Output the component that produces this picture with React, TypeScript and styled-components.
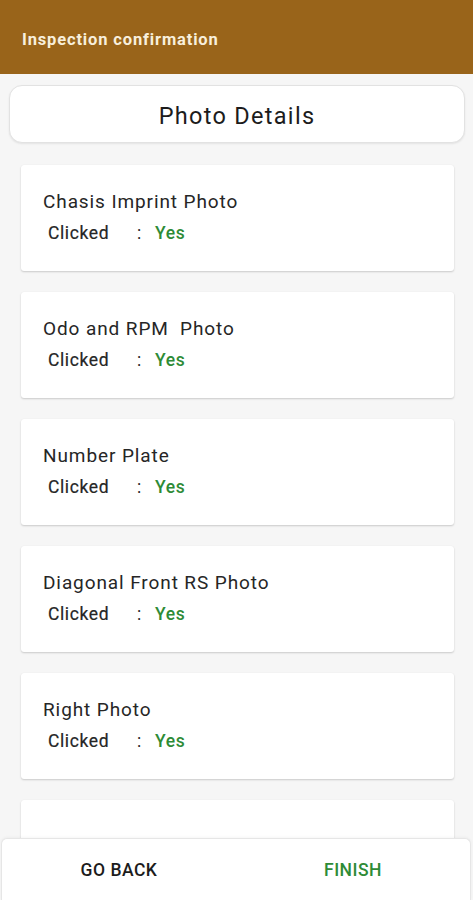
import React from "react";
import styled, { createGlobalStyle } from "styled-components";

const Global = createGlobalStyle`
  html, body { margin: 0; padding: 0; height: 100%; overflow: hidden; }
  body { font-family: Roboto, "Noto Sans", Arial, sans-serif; background: #f6f6f6; }
  * { box-sizing: border-box; }
`;

const Screen = styled.div`
  width: 473px;
  height: 900px;
  display: flex;
  flex-direction: column;
  background: #f6f6f6;
  position: relative;
  overflow: hidden;
`;

const Header = styled.header`
  height: 74px;
  flex-shrink: 0;
  background: #99641a;
  display: flex;
  align-items: center;
  padding: 4px 22px 0 22px;
`;

const HeaderTitle = styled.h1`
  margin: 0;
  font-size: 16.5px;
  font-weight: 700;
  color: #f8efdc;
  letter-spacing: 0.85px;
`;

const Body = styled.main`
  flex: 1;
  display: flex;
  flex-direction: column;
  padding: 11px 8px 0 9px;
`;

const SectionCard = styled.div`
  height: 58px;
  background: #fff;
  border: 1px solid #e2e2e2;
  border-radius: 13px;
  box-shadow: 0 1px 2px rgba(0, 0, 0, 0.08);
  display: flex;
  align-items: center;
  justify-content: center;
  padding-top: 3px;
`;

const SectionTitle = styled.h2`
  margin: 0;
  font-size: 23.5px;
  font-weight: 400;
  color: #1c1c1c;
  letter-spacing: 1.3px;
`;

const List = styled.div`
  display: flex;
  flex-direction: column;
  gap: 21px;
  padding: 22px 11px 0 12px;
`;

const Card = styled.div`
  height: 106px;
  flex-shrink: 0;
  background: #fff;
  border-radius: 3px;
  box-shadow: 0 1px 2px rgba(0, 0, 0, 0.18), 0 0 1px rgba(0, 0, 0, 0.06);
  padding: 26px 22px 0 22px;
  display: flex;
  flex-direction: column;
  gap: 9px;
`;

const CardTitle = styled.div`
  font-size: 19px;
  color: #262626;
  line-height: 22px;
  letter-spacing: 0.9px;
  white-space: pre;
`;

const Row = styled.div`
  display: flex;
  align-items: center;
  padding-left: 5px;
  font-size: 17.5px;
  line-height: 22px;
  letter-spacing: 0.6px;
`;

const Label = styled.span`
  width: 89px;
  color: #262626;
  font-weight: 400;
  -webkit-text-stroke: 0.2px #262626;
`;

const Colon = styled.span`
  width: 18px;
  color: #262626;
`;

const Value = styled.span`
  color: #2e8b36;
  font-weight: 500;
`;

const BottomBar = styled.footer`
  position: absolute;
  left: 1px;
  right: 2px;
  bottom: 0;
  height: 62px;
  background: #fff;
  border: 1px solid #e6e6e6;
  border-bottom: none;
  border-radius: 6px 6px 0 0;
  box-shadow: 0 -1px 3px rgba(0, 0, 0, 0.04);
  display: grid;
  grid-template-columns: 1fr 1fr;
`;

const BarButton = styled.button<{ $accent?: boolean }>`
  border: none;
  background: transparent;
  font-family: Roboto, Arial, sans-serif;
  font-size: 17.5px;
  font-weight: 500;
  letter-spacing: 0.5px;
  color: ${(p) => (p.$accent ? "#2e8b36" : "#1c1c1c")};
  display: flex;
  align-items: center;
  justify-content: center;
  padding: 0;
`;

const items = [
  "Chasis Imprint Photo",
  "Odo and RPM  Photo",
  "Number Plate",
  "Diagonal Front RS Photo",
  "Right Photo",
];

export default function App() {
  return (
    <>
      <Global />
      <Screen>
        <Header>
          <HeaderTitle>Inspection confirmation</HeaderTitle>
        </Header>
        <Body>
          <SectionCard>
            <SectionTitle>Photo Details</SectionTitle>
          </SectionCard>
          <List>
            {items.map((t) => (
              <Card key={t}>
                <CardTitle>{t}</CardTitle>
                <Row>
                  <Label>Clicked</Label>
                  <Colon>:</Colon>
                  <Value>Yes</Value>
                </Row>
              </Card>
            ))}
            <Card aria-hidden />
          </List>
        </Body>
        <BottomBar>
          <BarButton>GO BACK</BarButton>
          <BarButton $accent>FINISH</BarButton>
        </BottomBar>
      </Screen>
    </>
  );
}
